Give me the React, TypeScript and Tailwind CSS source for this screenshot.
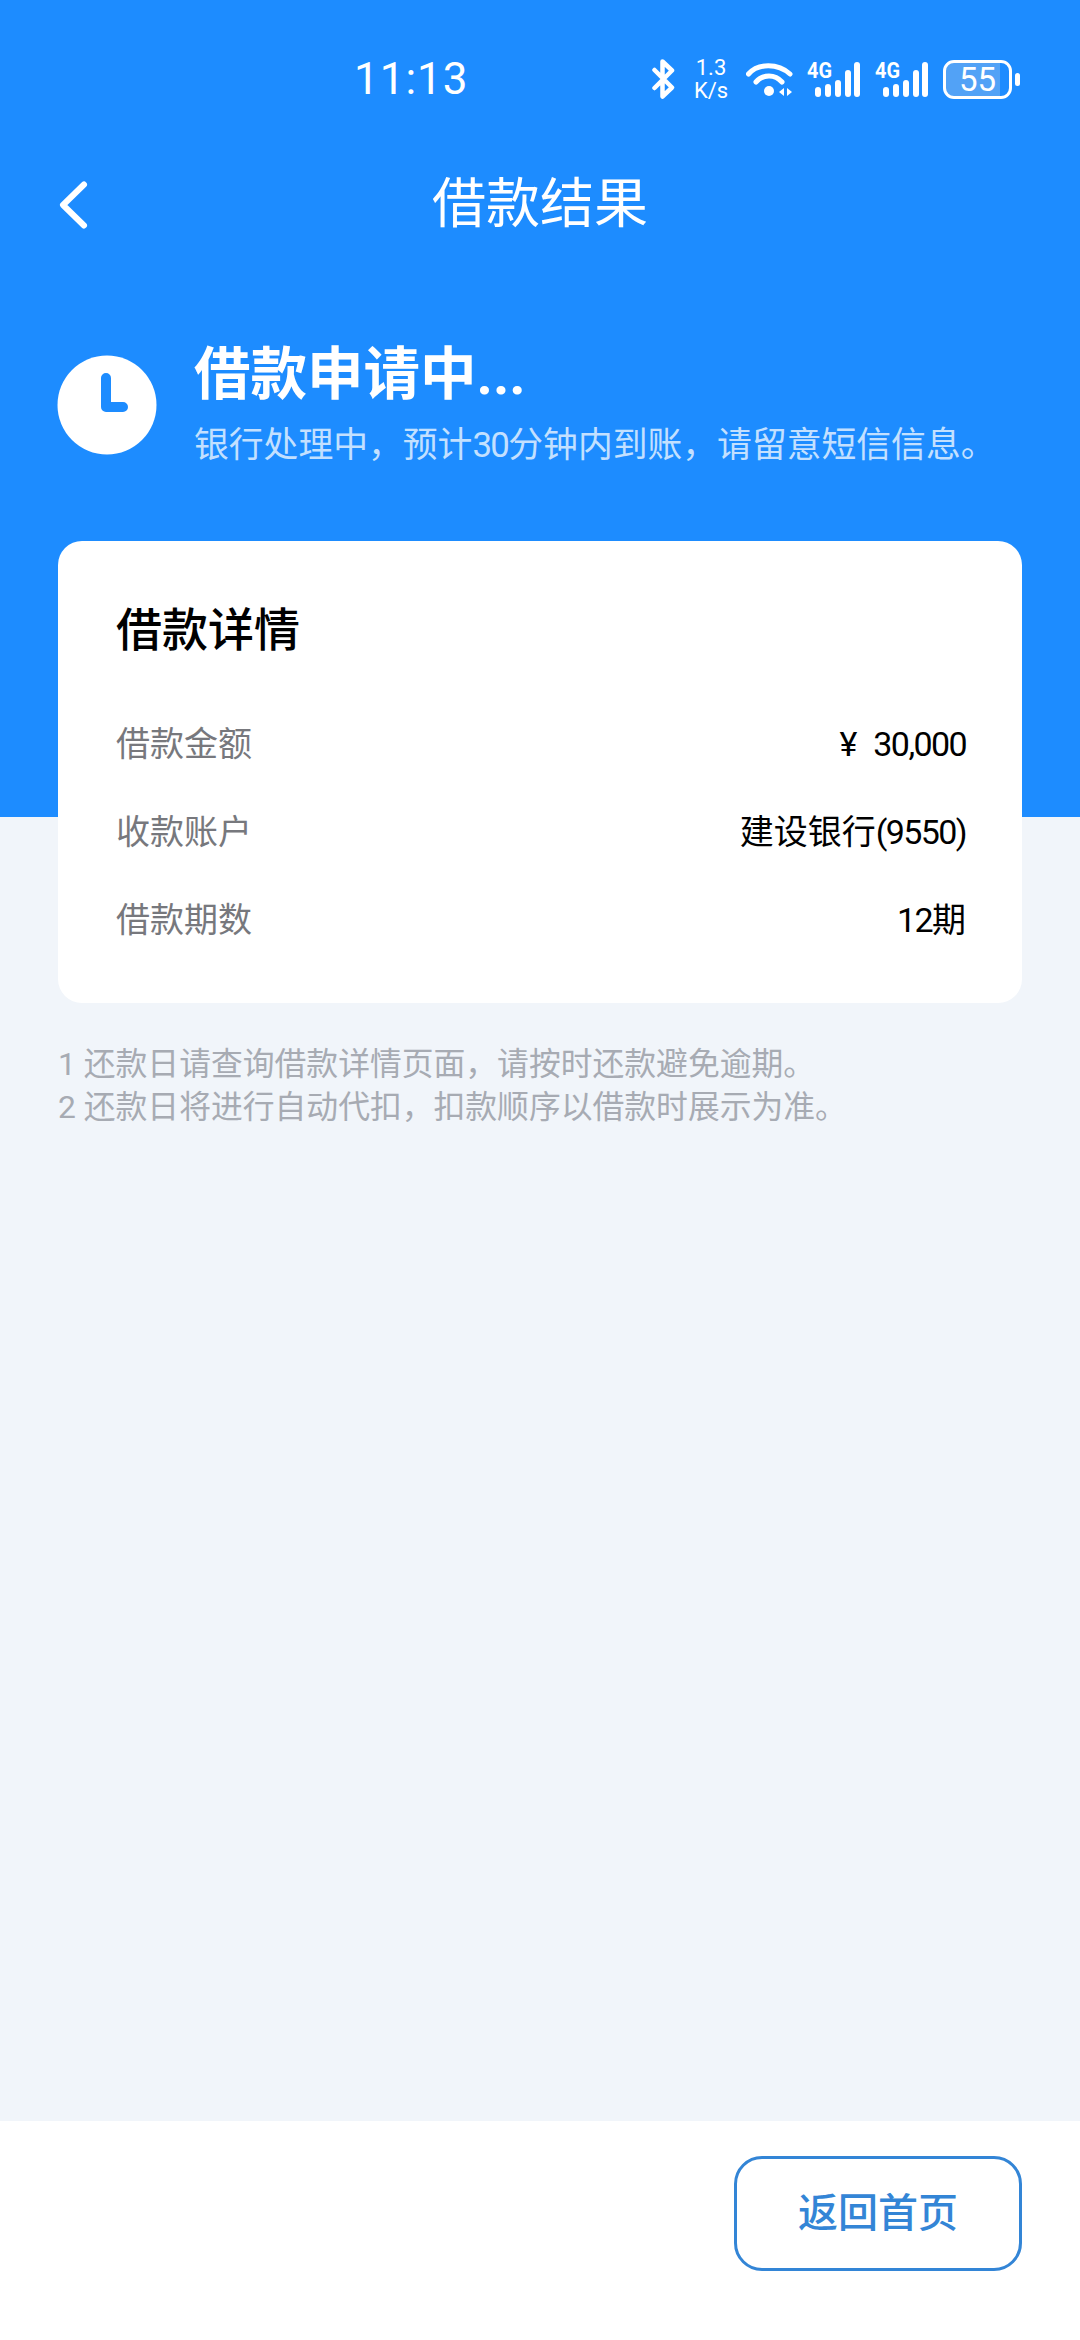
import React from "react";

const cjk = "font-['Roboto','Noto_Sans_CJK_SC',sans-serif]";

const Signal: React.FC = () => {
  return (
    <svg width="53" height="38" viewBox="0 0 53 38" fill="white" className="overflow-visible">
      <text x="0" y="18" fontSize="22" fontWeight="700" fontFamily="Roboto" textLength="25" lengthAdjust="spacingAndGlyphs">4G</text>
      <rect x="8" y="27" width="6" height="10" rx="3" />
      <rect x="18" y="24" width="6" height="13" rx="3" />
      <rect x="28" y="20" width="6" height="17" rx="3" />
      <rect x="38" y="10" width="6" height="27" rx="3" />
      <rect x="47" y="2" width="6" height="35" rx="3" />
    </svg>
  );
};

const StatusBar: React.FC = () => {
  return (
    <div className="h-[158px] flex items-center text-white">
      <div className="ml-[354px] text-[44px] font-['Roboto',sans-serif] tracking-[1px] leading-none">11:13</div>
      <div className="ml-auto mr-[60px] flex items-center">
        {/* bluetooth */}
        <svg width="23" height="40" viewBox="0 0 23 40" fill="none" stroke="white" strokeWidth="4.5" strokeLinecap="round" strokeLinejoin="round">
          <path d="M2.5 11 L20 28.5 L10.5 37.5 V2.5 L20 11.5 L2.5 29" />
        </svg>
        <div className="ml-[18px] w-[36px] flex flex-col items-center text-[22px] leading-[23px] font-['Roboto',sans-serif]">
          <span>1.3</span>
          <span>K/s</span>
        </div>
        <svg className="ml-[17px]" width="47" height="36" viewBox="0 0 47 36" fill="none" stroke="white" strokeWidth="5" strokeLinecap="round">
          <path d="M2.5 13 C12 2 32 2 44 13" />
          <path d="M10 21 C17 13 29 13 36 21" />
          <circle cx="23" cy="30" r="5" fill="white" stroke="none" />
          <path d="M33 31 L38 27 V35 Z M41 27 L46 31 L41 35 Z" fill="white" stroke="none" />
        </svg>
        <div className="ml-[14px]"><Signal /></div>
        <div className="ml-[15px]"><Signal /></div>
        <div className="ml-[15px] w-[69px] h-[39px] rounded-[11px] border-[3px] border-white bg-[linear-gradient(90deg,#52a2f6_85%,#1d8cff_85%)] flex items-center justify-center text-[33px] leading-none font-['Roboto',sans-serif]">55</div>
        <div className="ml-[3px] w-[5px] h-[13px] rounded-full bg-white" />
      </div>
    </div>
  );
};

const Num: React.FC<{ children: React.ReactNode }> = ({ children }) => {
  return <span className="tracking-[-1.6px]">{children}</span>;
};

const DetailRow: React.FC<{ label: string; children: React.ReactNode }> = ({ label, children }) => {
  return (
    <div className="h-[88px] flex items-center justify-between text-[34px]">
      <span className="text-[#77787d]">{label}</span>
      <span className="text-black">{children}</span>
    </div>
  );
};

export default function App() {
  return (
    <div className={`w-[1080px] h-[2340px] bg-[#f1f5fa] flex flex-col ${cjk}`}>
      <div className="h-[817px] bg-[#1d8cff] shrink-0">
        <StatusBar />
        {/* 导航 */}
        <div className="h-[94px] flex items-center relative">
          <svg className="ml-[58px]" width="32" height="52" viewBox="0 0 32 52" fill="none" stroke="white" strokeWidth="6" strokeLinecap="round" strokeLinejoin="round">
            <path d="M26 5.5 L5 26 L26 46.5" />
          </svg>
          <div className="absolute inset-x-0 text-center text-white text-[54px] leading-none">借款结果</div>
        </div>
        {/* 状态 */}
        <div className="mt-[90px] flex items-center pl-[57px]">
          <svg width="100" height="100" viewBox="0 0 100 100" className="shrink-0">
            <circle cx="50" cy="50" r="49.5" fill="white" />
            <path d="M49 23 V52 H66" fill="none" stroke="#1d8cff" strokeWidth="10" strokeLinecap="round" strokeLinejoin="round" />
          </svg>
          <div className="ml-[37px]">
            <div className="text-white text-[56.5px] leading-[66px] font-bold">借款申请中...</div>
            <div className="text-[#c3e0ff] text-[34.8px] leading-[46px] mt-[14px]">
              银行处理中，预计<Num>30</Num>分钟内到账，请留意短信信息。
            </div>
          </div>
        </div>
      </div>

      {/* 借款详情 */}
      <div className="mx-[58px] -mt-[276px] h-[462px] bg-white rounded-[24px] pl-[58px] pr-[56px] pt-[63px] shrink-0">
        <div className="text-[46px] leading-[52px] font-medium text-black mb-[44px]">借款详情</div>
        <DetailRow label="借款金额">
          <span>¥</span>
          <span className="ml-[16px]"><Num>30,000</Num></span>
        </DetailRow>
        <DetailRow label="收款账户">
          建设银行<Num>(9550)</Num>
        </DetailRow>
        <DetailRow label="借款期数">
          <Num>12</Num>期
        </DetailRow>
      </div>

      <div className="mx-[58px] mt-[40px] text-[31.8px] leading-[43px] text-[#a7abb3]">
        <div>1 还款日请查询借款详情页面，请按时还款避免逾期。</div>
        <div>2 还款日将进行自动代扣，扣款顺序以借款时展示为准。</div>
      </div>

      <div className="mt-auto h-[219px] bg-white flex justify-end items-start pt-[35px] pr-[58px]">
        <button className="w-[288px] h-[115px] rounded-[28px] border-[3px] border-[#3385d6] text-[#3385d6] text-[40px] font-medium">返回首页</button>
      </div>
    </div>
  );
}
